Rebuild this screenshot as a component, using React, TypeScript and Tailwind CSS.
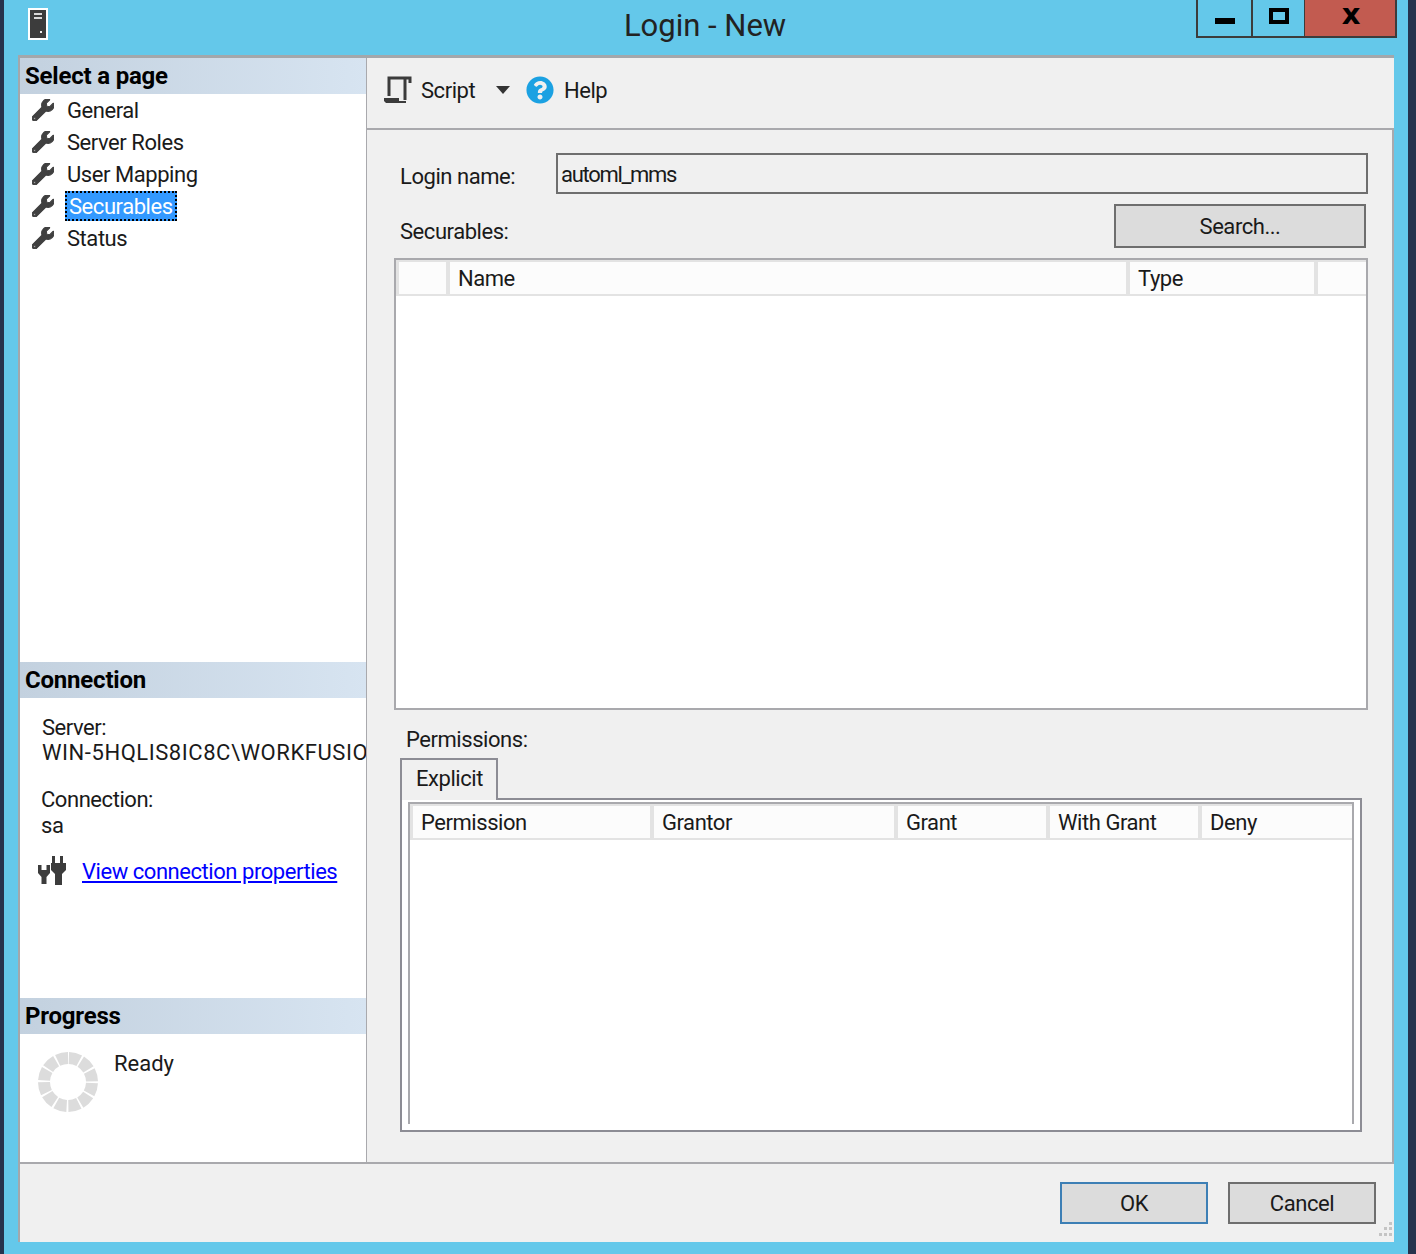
import { FaWrench, FaQuestionCircle } from "react-icons/fa";

const font = "font-['Roboto',sans-serif] text-[22px] tracking-[-0.45px] text-[#1a1a1a]";

const pages = ["General", "Server Roles", "User Mapping", "Securables", "Status"];

const SectionHeader = ({ title }: { title: string }) => (
    <div className="h-[36px] pl-[5px] flex items-center bg-gradient-to-r from-[#c3d1df] to-[#d7e4f1] font-bold text-[24px] tracking-[-0.2px] text-black">
        {title}
    </div>
);

const ServerIcon = () => (
    <svg width="20" height="32" viewBox="0 0 20 32" className="ml-[15px] mt-[8px]">
        <rect width="20" height="32" fill="#fff" />
        <rect x="2" y="2" width="16" height="28" fill="#3c3c3c" />
        <rect x="6" y="5" width="8" height="2" fill="#d8d8d8" />
        <rect x="6" y="9" width="8" height="2" fill="#d8d8d8" />
        <rect x="12" y="23" width="2" height="2" fill="#eee" />
    </svg>
);

const ScriptIcon = () => (
    <svg width="30" height="30" viewBox="0 0 30 30">
        <path d="M6 21V3h21v5" fill="none" stroke="#3b3b3b" strokeWidth="3" />
        <path d="M22 3v22" fill="none" stroke="#3b3b3b" strokeWidth="3" />
        <path d="M1 23h15v3h7v2H3l-2-2z" fill="#3b3b3b" />
    </svg>
);

const PlugIcon = () => (
    <svg width="30" height="32" viewBox="0 0 30 32" fill="#3c3c3c">
        <path d="M0 10h3.5v5h5v-5H12v8l-3.5 4v7h-5v-7L0 18z" />
        <path d="M14 1h3v7h5V1h3v7h3v7l-4 4v11h-7V19l-4-4V8h1z" />
    </svg>
);

const Spinner = () => (
    <svg width="60" height="60" viewBox="0 0 60 60" className="-rotate-90">
        <circle cx="30" cy="30" r="24" fill="none" stroke="#dcdcdc" strokeWidth="12" strokeDasharray="10.8 1.77" strokeDashoffset="-0.9" />
    </svg>
);

const Button = ({ label, width, border }: { label: string; width: string; border: string }) => (
    <button className={`${width} ${border} h-full border-2 bg-[#dcdcdc] text-center`}>{label}</button>
);

const HeaderCell = ({ label, width }: { label?: string; width: string }) => (
    <div className={`${width} h-full bg-[#fcfcfc] pl-[8px] flex items-center`}>{label}</div>
);

export default function App() {
    return (
        <div className={`${font} w-[1416px] h-[1254px] flex bg-[#64c8ea] overflow-hidden`}>
            <div className="w-[4px] bg-[#26334d]" />

            <div className="w-[1404px] flex flex-col">
                {/* title bar */}
                <div className="h-[55px] ml-[9px] mr-[11px] grid grid-cols-[1fr_auto_1fr] items-start">
                    <ServerIcon />
                    <div className="mt-[7px] text-[31px] leading-[38px] tracking-[0px] text-[#222]">Login - New</div>
                    <div className="flex justify-end">
                        <div className="h-[38px] w-[201px] flex border-2 border-t-0 border-[#3c3c3c]">
                            <div className="w-[55px] border-r-2 border-[#3c3c3c] flex items-center justify-center">
                                <div className="w-[20px] h-[6px] bg-black mt-[5px]" />
                            </div>
                            <div className="w-[51px] flex items-center justify-center">
                                <div className="w-[20px] h-[16px] border-[4px] border-black -mt-[5px]" />
                            </div>
                            <div className="flex-1 bg-[#c25b50] border-l border-[#3c3c3c] pt-[2px] flex items-start justify-center">
                                <div className="text-black font-bold text-[29px] leading-[24px] font-['DejaVu_Sans',sans-serif] pl-[2px]">x</div>
                            </div>
                        </div>
                    </div>
                </div>

                {/* window */}
                <div className="ml-[14px] mr-[14px] h-[1187px] flex flex-col bg-[#f0f0f0] border-t-[3px] border-l-2 border-[#a3a7ab]">
                    <div className="h-[1104px] flex">
                        {/* left panel */}
                        <div className="w-[346px] bg-white flex flex-col shrink-0 overflow-hidden">
                            <div className="h-[604px]">
                                <SectionHeader title="Select a page" />
                                {pages.map((page) => (
                                    <div key={page} className="h-[32px] flex items-center pl-[12px]">
                                        <FaWrench stroke="currentColor" strokeWidth={24} className="w-[22px] h-[22px] text-[#404040] shrink-0" />
                                        {page === "Securables" ? (
                                            <span className="ml-[11px] h-[30px] w-[112px] pl-[2px] flex items-center bg-[#3399ff] text-white border-2 border-dotted border-black">
                                                {page}
                                            </span>
                                        ) : (
                                            <span className="ml-[13px] pt-[1px]">{page}</span>
                                        )}
                                    </div>
                                ))}
                            </div>

                            <div className="h-[336px]">
                                <SectionHeader title="Connection" />
                                <div className="pl-[22px] pt-[17px] leading-[25px] whitespace-nowrap">
                                    <div>Server:</div>
                                    <div className="tracking-[0.55px]">WIN-5HQLIS8IC8C\WORKFUSIO</div>
                                    <div className="mt-[22px] -ml-[1px]">Connection:</div>
                                    <div className="mt-[1px] -ml-[1px]">sa</div>
                                    <div className="mt-[17px] -ml-[4px] flex items-center">
                                        <PlugIcon />
                                        <a href="#" className="ml-[14px] text-[#0000ff] underline">View connection properties</a>
                                    </div>
                                </div>
                            </div>

                            <div className="h-[164px]">
                                <SectionHeader title="Progress" />
                                <div className="pl-[18px] pt-[18px] flex items-start">
                                    <Spinner />
                                    <span className="ml-[16px] -mt-[1px] leading-[25px] tracking-[0px]">Ready</span>
                                </div>
                            </div>
                        </div>

                        {/* right panel */}
                        <div className="flex-1 flex flex-col border-l border-[#a9a9ad] bg-white">
                            <div className="h-[72px] bg-[#f0f0f0] border-b-2 border-[#a9a9ad] pl-[16px] pb-[6px] flex items-center shrink-0">
                                <ScriptIcon />
                                <span className="ml-[8px] w-[52px]">Script</span>
                                <svg width="14" height="8" viewBox="0 0 14 8" className="ml-[23px]">
                                    <path d="M0 0h14L7 8z" fill="#333" />
                                </svg>
                                <FaQuestionCircle className="ml-[16px] w-[28px] h-[28px] text-[#1ba1e2]" />
                                <span className="ml-[10px]">Help</span>
                            </div>

                            <div className="flex-1 bg-[#f0f0f0] border-r-2 border-[#a9a9ad] pl-[27px] pr-[24px] pt-[23px] flex flex-col">
                                <div className="h-[41px] flex items-center">
                                    <span className="w-[156px] ml-[6px] pt-[5px] shrink-0">Login name:</span>
                                    <div className="flex-1 h-full border-2 border-[#6e6e6e] pl-[3px] pt-[1px] flex items-center tracking-[-1.3px]">automl_mms</div>
                                </div>

                                <div className="h-[44px] mt-[10px] flex justify-between">
                                    <span className="ml-[6px] pt-[11px]">Securables:</span>
                                    <div className="mr-[2px] flex">
                                        <Button label="Search..." width="w-[252px]" border="border-[#6e6e6e]" />
                                    </div>
                                </div>

                                {/* securables grid */}
                                <div className="mt-[10px] h-[452px] bg-white border-2 border-[#a9a9ad]">
                                    <div className="h-[36px] pl-[3px] pt-[2px] pb-[2px] flex gap-[4px] bg-[#e3e3e3]">
                                        <HeaderCell width="w-[47px]" />
                                        <HeaderCell label="Name" width="w-[676px]" />
                                        <HeaderCell label="Type" width="w-[184px]" />
                                        <HeaderCell width="flex-1" />
                                    </div>
                                </div>

                                <div className="ml-[12px] mt-[16px] leading-[28px]">Permissions:</div>

                                {/* permissions tab */}
                                <div className="mt-[4px] ml-[6px] mr-[6px] flex flex-col flex-1 mb-[30px]">
                                    <div className="w-[98px] h-[42px] bg-[#f0f0f0] border-2 border-b-0 border-[#8c8c94] pl-[14px] pb-[4px] flex items-center -mb-[2px] z-10">Explicit</div>
                                    <div className="flex-1 border-2 border-[#8c8c94] px-[6px] pt-[2px] bg-white">
                                        <div className="h-[322px] border-x-2 border-t-2 border-[#a9a9ad]">
                                            <div className="h-[36px] pl-[3px] pt-[2px] pb-[2px] flex gap-[4px] bg-[#e3e3e3]">
                                                <HeaderCell label="Permission" width="w-[237px]" />
                                                <HeaderCell label="Grantor" width="w-[240px]" />
                                                <HeaderCell label="Grant" width="w-[148px]" />
                                                <HeaderCell label="With Grant" width="w-[148px]" />
                                                <HeaderCell label="Deny" width="flex-1" />
                                            </div>
                                        </div>
                                    </div>
                                </div>
                            </div>
                        </div>
                    </div>

                    {/* footer */}
                    <div className="relative flex-1 border-t-2 border-[#a9a9ad] pt-[18px] pr-[18px] flex justify-end gap-[20px]">
                        <div className="h-[42px] flex gap-[20px]">
                            <Button label="OK" width="w-[148px]" border="border-[#3d7fb5]" />
                            <Button label="Cancel" width="w-[148px]" border="border-[#6e6e6e]" />
                        </div>
                        <svg width="16" height="16" viewBox="0 0 16 16" fill="#c4c4c4" className="absolute right-[1px] bottom-[4px]">
                            <rect x="12" y="0" width="3" height="3" />
                            <rect x="7" y="5" width="3" height="3" />
                            <rect x="12" y="5" width="3" height="3" />
                            <rect x="2" y="11" width="3" height="3" />
                            <rect x="7" y="11" width="3" height="3" />
                            <rect x="12" y="11" width="3" height="3" />
                        </svg>
                    </div>
                </div>
            </div>

            <div className="w-[8px] bg-[#26334d]" />
        </div>
    );
}
